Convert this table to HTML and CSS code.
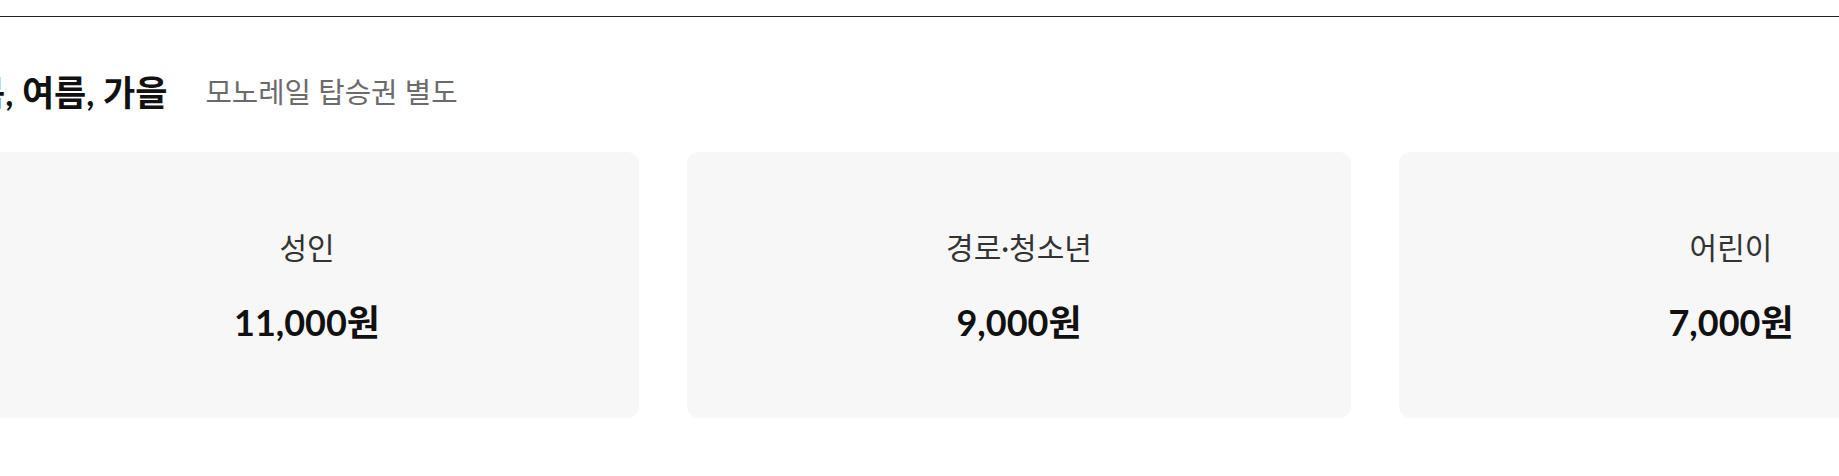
FILE: index.html
```html
<!DOCTYPE html>
<html lang="ko">
<head>
<meta charset="utf-8">
<title>요금 안내</title>
<link rel="stylesheet" href="styles.css">
</head>
<body>
<div class="page">
  <section class="fare">
    <div class="fare-head">
      <h2 class="fare-title">봄, 여름, 가을</h2>
      <p class="fare-note">모노레일 탑승권 별도</p>
    </div>
    <ul class="fare-list">
      <li class="fare-card">
        <span class="fare-label">성인</span>
        <strong class="fare-price">11,000원</strong>
      </li>
      <li class="fare-card">
        <span class="fare-label">경로·청소년</span>
        <strong class="fare-price">9,000원</strong>
      </li>
      <li class="fare-card">
        <span class="fare-label">어린이</span>
        <strong class="fare-price">7,000원</strong>
      </li>
    </ul>
  </section>
</div>
</body>
</html>
```
FILE: styles.css
```css
html, body {
  margin: 0;
  padding: 0;
  background: #fff;
}

body {
  overflow: hidden;
  font-family: Lato, "Noto Sans CJK KR", sans-serif;
  color: #111;
}

.page {
  padding-top: 16px;
}

.fare {
  border-top: 1px solid #222;
}

.fare-head {
  width: 2088px;
  margin-left: -27px;
  display: flex;
  align-items: center;
  gap: 38px;
  margin-top: 51px;
  height: 48px;
}

.fare-title {
  margin: 0;
  font-size: 35px;
  line-height: 48px;
  font-weight: 700;
  color: #111;
}

.fare-note {
  margin: 0;
  font-size: 28.7px;
  line-height: 48px;
  color: #6b6b6b;
}

.fare-list {
  width: 2088px;
  margin-left: -25px;
  list-style: none;
  padding: 0;
  margin-top: 36px;
  margin-bottom: 0;
  display: grid;
  grid-template-columns: repeat(3, 664px);
  gap: 48px;
}

.fare-card {
  height: 266px;
  box-sizing: border-box;
  padding-top: 2px;
  background: #f7f7f7;
  border-radius: 12px;
  display: flex;
  flex-direction: column;
  align-items: center;
  justify-content: center;
  gap: 32px;
}

.fare-label {
  font-size: 30px;
  line-height: 40px;
  color: #333;
}

.fare-price {
  font-size: 36px;
  line-height: 46px;
  font-weight: 700;
  color: #111;
}
```
